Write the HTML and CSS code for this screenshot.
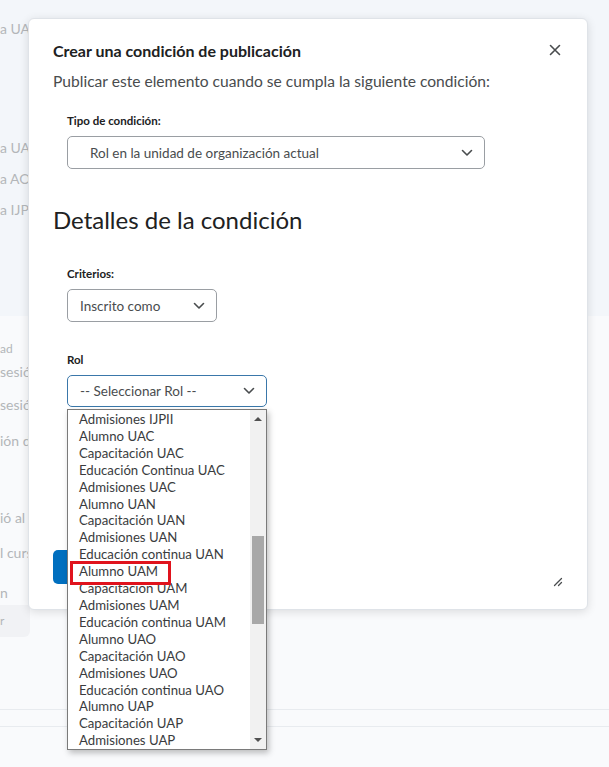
FILE: index.html
```html
<!DOCTYPE html>
<html lang="es">
<head>
    <meta charset="UTF-8">
    <title>Crear una condición de publicación</title>
    <link rel="stylesheet" href="styles.css">
</head>
<body>
<!-- página de fondo -->
<div class="page">
    <div class="band-top">
        <p class="bg-line first">a UAN</p>
        <p class="bg-line l2">a UAC</p>
        <p class="bg-line l3">a AO</p>
        <p class="bg-line l3">a IJPII</p>
    </div>
    <div class="band-bottom">
        <p class="bg-head">ad</p>
        <p class="bg-line b1">sesión</p>
        <p class="bg-line b2">sesión</p>
        <p class="bg-line b3">ión de</p>
        <p class="bg-line b4">ió al c</p>
        <p class="bg-line b5">l curs</p>
        <p class="bg-line b6">n</p>
        <div class="bg-box">r</div>
        <div class="bg-rule r1"></div>
        <div class="bg-rule r2"></div>
    </div>
</div>

<!-- diálogo -->
<div class="dialog">
    <div class="dialog-head">
        <h2 class="dialog-title">Crear una condición de publicación</h2>
        <span class="close">
            <svg width="12" height="12" viewBox="0 0 12 12"><path d="M1.5 1.5l9 9M10.5 1.5l-9 9" stroke="#494c4e" stroke-width="1.6" fill="none" stroke-linecap="round"/></svg>
        </span>
    </div>
    <p class="dialog-text">Publicar este elemento cuando se cumpla la siguiente condición:</p>

    <div class="field first-field">
        <label class="field-label">Tipo de condición:</label>
        <div class="select wide">
            <span>Rol en la unidad de organización actual</span>
            <svg class="chev" width="12" height="8" viewBox="0 0 12 8"><path d="M1.5 1.5l4.5 4.5 4.5-4.5" stroke="#494c4e" stroke-width="1.6" fill="none" stroke-linecap="round" stroke-linejoin="round"/></svg>
        </div>
    </div>

    <h3 class="section-title">Detalles de la condición</h3>

    <div class="field crit-field">
        <label class="field-label">Criterios:</label>
        <div class="select narrow">
            <span>Inscrito como</span>
            <svg class="chev" width="12" height="8" viewBox="0 0 12 8"><path d="M1.5 1.5l4.5 4.5 4.5-4.5" stroke="#494c4e" stroke-width="1.6" fill="none" stroke-linecap="round" stroke-linejoin="round"/></svg>
        </div>
    </div>

    <div class="field rol-field">
        <label class="field-label">Rol</label>
        <div class="select role focused">
            <span>-- Seleccionar Rol --</span>
            <svg class="chev" width="12" height="8" viewBox="0 0 12 8"><path d="M1.5 1.5l4.5 4.5 4.5-4.5" stroke="#494c4e" stroke-width="1.6" fill="none" stroke-linecap="round" stroke-linejoin="round"/></svg>

            <div class="dropdown">
                <ul class="options">
                    <li>Admisiones IJPII</li>
                    <li>Alumno UAC</li>
                    <li>Capacitación UAC</li>
                    <li>Educación Continua UAC</li>
                    <li>Admisiones UAC</li>
                    <li>Alumno UAN</li>
                    <li>Capacitación UAN</li>
                    <li>Admisiones UAN</li>
                    <li>Educación continua UAN</li>
                    <li>Alumno UAM</li>
                    <li>Capacitación UAM</li>
                    <li>Admisiones UAM</li>
                    <li>Educación continua UAM</li>
                    <li>Alumno UAO</li>
                    <li>Capacitación UAO</li>
                    <li>Admisiones UAO</li>
                    <li>Educación continua UAO</li>
                    <li>Alumno UAP</li>
                    <li>Capacitación UAP</li>
                    <li>Admisiones UAP</li>
                </ul>
                <div class="scrollbar">
                    <span class="arrow up"></span>
                    <span class="thumb"></span>
                    <span class="arrow down"></span>
                </div>
                <div class="mark"></div>
            </div>
        </div>
    </div>

    <div class="dialog-foot">
        <button class="btn-primary" aria-label="Crear"></button>
        <svg class="grip" width="12" height="12" viewBox="0 0 12 12"><path d="M10.5 3.5l-7 7M10.5 7.5l-3 3" stroke="#494c4e" stroke-width="1.3" fill="none" stroke-linecap="round"/></svg>
    </div>
</div>
</body>
</html>
```

FILE: styles.css
```css
body{
    margin: 0;
    font-family: Lato, "Open Sans", sans-serif;
    color: #494c4e;
}
.page{
    width: 609px;
    height: 767px;
    overflow: hidden;
}
.band-top{
    height: 316px;
    background: #f3f6fa;
    overflow: hidden;
}
.band-bottom{
    height: 451px;
    background: #f9fafc;
    overflow: hidden;
}
.bg-line{
    margin: 0;
    font-size: 14px;
    line-height: 18px;
    color: #b3b6b9;
    white-space: nowrap;
}
.bg-line.first{ margin-top: 20px; }
.bg-line.l2{ margin-top: 101px; }
.bg-line.l3{ margin-top: 13px; }
.bg-head{
    margin: 24px 0 0;
    font-size: 12px;
    line-height: 18px;
    color: #b3b6b9;
}
.bg-line.b1{ margin-top: 5px; }
.bg-line.b2{ margin-top: 15px; }
.bg-line.b3{ margin-top: 18px; }
.bg-line.b4{ margin-top: 59px; }
.bg-line.b5{ margin-top: 17px; }
.bg-line.b6{ margin-top: 22px; }
.bg-box{
    width: 30px;
    height: 32px;
    margin-top: 3px;
    background: #f1f2f5;
    border-radius: 0 0 6px 0;
    font-size: 12px;
    line-height: 32px;
    color: #b3b6b9;
}
.bg-rule{
    height: 1px;
    background: #e8ebef;
}
.bg-rule.r1{ margin-top: 72px; }
.bg-rule.r2{ margin-top: 16px; }

/* diálogo */
.dialog{
    position: absolute;
    left: 28px;
    top: 18px;
    width: 560px;
    height: 592px;
    padding: 0 24px;
    box-sizing: border-box;
    background: #fff;
    border: 1px solid #dfe3e8;
    border-radius: 6px;
    box-shadow: 0 2px 10px rgba(0,0,0,0.12);
}
.dialog-head{
    display: flex;
    justify-content: space-between;
    align-items: center;
    padding-top: 21px;
}
.dialog-title{
    margin: 0;
    font-size: 16px;
    font-weight: 700;
    line-height: 22px;
    color: #202122;
}
.close{
    display: flex;
    margin-right: 2px;
    margin-top: -2px;
}
.dialog-text{
    margin: 8px 0 0;
    font-size: 15.6px;
    line-height: 22px;
}
.field{
    padding-left: 14px;
}
.first-field{ margin-top: 21px; }
.field-label{
    display: block;
    font-size: 11.5px;
    font-weight: 700;
    line-height: 16px;
    color: #202122;
    margin-bottom: 7px;
}
.select{
    position: relative;
    display: flex;
    align-items: center;
    justify-content: space-between;
    height: 33px;
    box-sizing: border-box;
    border: 1px solid #9a9ea3;
    border-radius: 5px;
    font-size: 13.5px;
    color: #494c4e;
}
.select.wide{
    width: 418px;
    padding: 0 11px 0 22px;
}
.select.narrow{
    width: 150px;
    padding: 0 11px 0 12px;
}
.select.role{
    width: 200px;
    height: 32px;
    padding: 0 11px 0 12px;
}
.select.focused{
    border-color: #3a77aa;
}
.section-title{
    margin: 36px 0 0;
    font-size: 24px;
    font-weight: 400;
    line-height: 30px;
    color: #202122;
}
.crit-field{ margin-top: 31px; }
.rol-field{ margin-top: 30px; }

/* lista abierta del select */
.dropdown{
    position: absolute;
    left: -1px;
    top: 33px;
    width: 200px;
    height: 341px;
    box-sizing: border-box;
    display: flex;
    background: #fff;
    border: 1px solid #7a7a7a;
    box-shadow: 2px 3px 6px rgba(0,0,0,0.25);
    z-index: 2;
}
.options{
    flex: 1;
    margin: 0;
    padding: 1px 0 0 11px;
    list-style: none;
    font-size: 13.2px;
    line-height: 16.9px;
    color: #3a3c3e;
    white-space: nowrap;
    overflow: hidden;
}
.scrollbar{
    position: relative;
    width: 16px;
    background: #f1f1f1;
}
.thumb{
    position: absolute;
    left: 2px;
    right: 2px;
    top: 126px;
    height: 88px;
    background: #a8a8a8;
}
.arrow{
    position: absolute;
    left: 4px;
    width: 0;
    height: 0;
    border-left: 4px solid transparent;
    border-right: 4px solid transparent;
}
.arrow.up{
    top: 7px;
    border-bottom: 4px solid #505050;
}
.arrow.down{
    bottom: 7px;
    border-top: 4px solid #505050;
}
.mark{
    position: absolute;
    left: 2px;
    top: 151px;
    width: 101px;
    height: 24px;
    box-sizing: border-box;
    border: 3px solid #e0131d;
}

.dialog-foot{
    display: flex;
    justify-content: space-between;
    align-items: flex-end;
    margin-top: 143px;
}
.btn-primary{
    width: 80px;
    height: 34px;
    border: none;
    border-radius: 5px;
    background: #006fbf;
}
.grip{
    margin: 0 0 -3px 0;
}
```
